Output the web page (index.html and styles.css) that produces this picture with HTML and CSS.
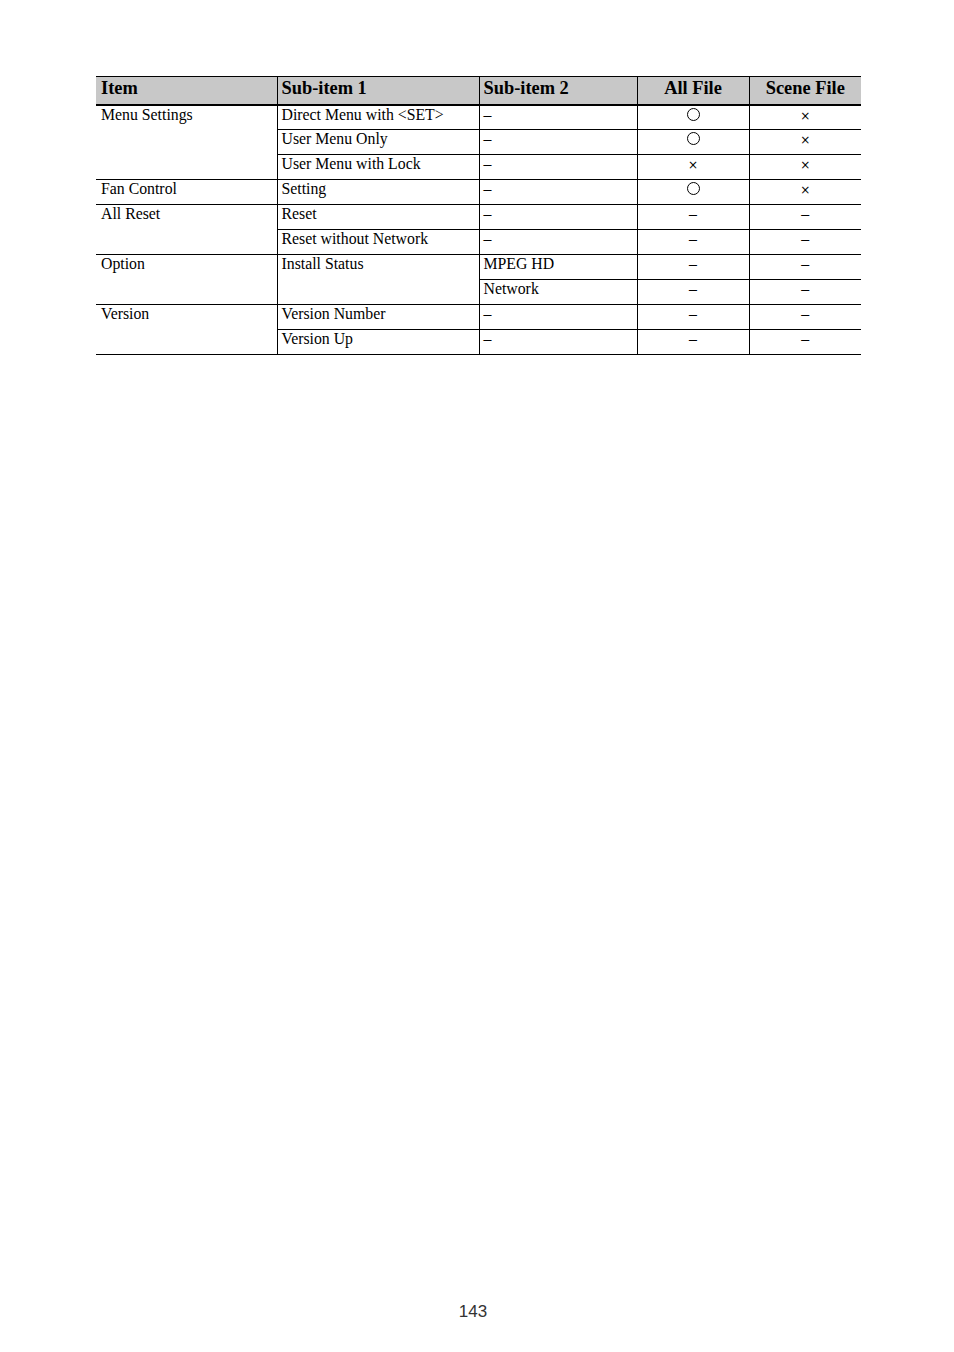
FILE: index.html
```html
<!DOCTYPE html>
<html>
<head>
<meta charset="utf-8">
<link rel="stylesheet" href="styles.css">
</head>
<body>
<div class="page">
  <table class="grid">
    <colgroup>
      <col class="c1"><col class="c2"><col class="c3"><col class="c4"><col class="c5">
    </colgroup>
    <thead>
      <tr>
        <th>Item</th>
        <th>Sub-item 1</th>
        <th>Sub-item 2</th>
        <th class="ctr">All File</th>
        <th class="ctr">Scene File</th>
      </tr>
    </thead>
    <tbody>
      <tr>
        <td rowspan="3" class="first">Menu Settings</td>
        <td>Direct Menu with &lt;SET&gt;</td>
        <td>–</td>
        <td class="ctr"><span class="circ"></span></td>
        <td class="ctr"><span class="x">×</span></td>
      </tr>
      <tr>
        <td>User Menu Only</td>
        <td>–</td>
        <td class="ctr"><span class="circ"></span></td>
        <td class="ctr"><span class="x">×</span></td>
      </tr>
      <tr>
        <td>User Menu with Lock</td>
        <td>–</td>
        <td class="ctr"><span class="x">×</span></td>
        <td class="ctr"><span class="x">×</span></td>
      </tr>
      <tr>
        <td class="first">Fan Control</td>
        <td>Setting</td>
        <td>–</td>
        <td class="ctr"><span class="circ"></span></td>
        <td class="ctr"><span class="x">×</span></td>
      </tr>
      <tr>
        <td rowspan="2" class="first">All Reset</td>
        <td>Reset</td>
        <td>–</td>
        <td class="ctr">–</td>
        <td class="ctr">–</td>
      </tr>
      <tr>
        <td>Reset without Network</td>
        <td>–</td>
        <td class="ctr">–</td>
        <td class="ctr">–</td>
      </tr>
      <tr>
        <td rowspan="2" class="first">Option</td>
        <td rowspan="2">Install Status</td>
        <td>MPEG HD</td>
        <td class="ctr">–</td>
        <td class="ctr">–</td>
      </tr>
      <tr>
        <td>Network</td>
        <td class="ctr">–</td>
        <td class="ctr">–</td>
      </tr>
      <tr>
        <td rowspan="2" class="first">Version</td>
        <td>Version Number</td>
        <td>–</td>
        <td class="ctr">–</td>
        <td class="ctr">–</td>
      </tr>
      <tr>
        <td>Version Up</td>
        <td>–</td>
        <td class="ctr">–</td>
        <td class="ctr">–</td>
      </tr>
    </tbody>
  </table>
  <div class="folio">143</div>
</div>
</body>
</html>
```

FILE: styles.css
```css
html, body {
  margin: 0;
  padding: 0;
  background: #ffffff;
}

.page {
  box-sizing: border-box;
  width: 954px;
  height: 1352px;
  padding: 76px 93px 30px 96px;
  display: flex;
  flex-direction: column;
  font-family: "Liberation Serif", "Times New Roman", serif;
  color: #000;
}

.grid {
  width: 765px;
  border-collapse: collapse;
  table-layout: fixed;
  font-size: 15.8px;
  line-height: 18px;
}

.c1 { width: 181px; }
.c2 { width: 202px; }
.c3 { width: 158px; }
.c4 { width: 112px; }
.c5 { width: 112px; }

.grid th {
  background: #c8c8c8;
  font-size: 18.4px;
  font-weight: bold;
  text-align: left;
  height: 28px;
  padding: 0 3px 0 4px;
  line-height: 22px;
  vertical-align: top;
  border-top: 1px solid #000;
  border-bottom: 2px solid #000;
  border-left: 1px solid #000;
  border-right: 1px solid #000;
  box-sizing: border-box;
}

.grid td {
  height: 25px;
  padding: 0 3px 0 4px;
  vertical-align: top;
  text-align: left;
  border: 1px solid #000;
  box-sizing: border-box;
}

.grid th:first-child,
.grid td.first {
  border-left: none;
  padding-left: 5px;
}

.grid tr > :last-child {
  border-right: none;
}

.grid .ctr {
  text-align: center;
  padding-left: 3px;
}

.circ {
  display: inline-block;
  width: 11px;
  height: 11px;
  border: 1px solid #000;
  border-radius: 50%;
  vertical-align: -1px;
}

.x {
  font-family: "DejaVu Sans", sans-serif;
  font-size: 12px;
}

.folio {
  margin-top: auto;
  text-align: center;
  font-family: "Liberation Sans", Arial, sans-serif;
  font-size: 17px;
  line-height: 20px;
  color: #333;
  margin-left: -96px;
  margin-right: -85px;
}
```
